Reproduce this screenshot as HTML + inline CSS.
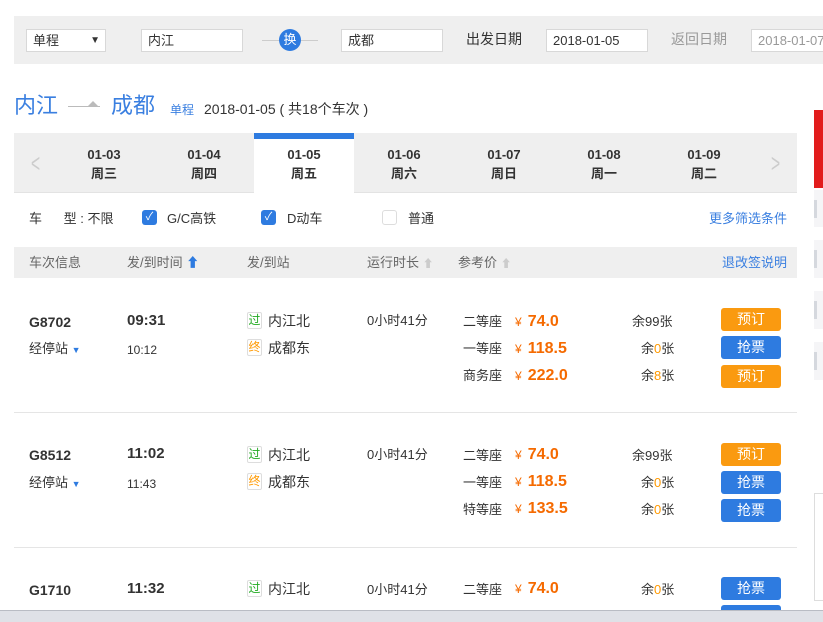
<!DOCTYPE html>
<html><head><meta charset="utf-8"><style>
*{margin:0;padding:0;box-sizing:border-box}
html,body{width:823px;height:622px;overflow:hidden}
body{background:#fff;font-family:"Liberation Sans","Noto Sans CJK SC",sans-serif;font-size:13px;color:#333;position:relative}
.a{position:absolute;white-space:nowrap;line-height:18px}
.inp{position:absolute;height:23px;border:1px solid #d8d8d8;background:#fff;font-size:13px;padding:0 6px;line-height:21px;color:#333;top:29px;white-space:nowrap;overflow:hidden}
.bt{position:absolute;width:60px;height:23px;border-radius:3px;color:#fff;font-size:14px;text-align:center;line-height:23px;left:721px}
.o{background:#fa9a10}.b{background:#2e7be0}
.pr{color:#f56a00;font-weight:bold;font-size:16px}
.pr span{font-size:12px;font-weight:normal;margin-right:6px}
.ic{display:inline-block;width:15px;height:17px;border:1px solid #ddd;border-radius:2px;font-size:12px;line-height:15px;text-align:center;margin-right:6px;vertical-align:top}
.tab{position:absolute;top:145px;width:100px;text-align:center;font-weight:bold;font-size:13px;line-height:19px;color:#333}
.cb{position:absolute;width:15px;height:15px;border-radius:3px;background:#2e7be0;top:210px;color:#fff;font-size:11px;text-align:center;line-height:15px}
</style></head><body>
<div class="a" style="left:14px;top:16px;width:809px;height:48px;background:#efefef"></div>
<div class="inp" style="left:26px;width:80px">单程<span style="position:absolute;right:5px;top:0;font-size:10px">▼</span></div>
<div class="inp" style="left:141px;width:102px">内江</div>
<div class="a" style="left:262px;top:40px;width:56px;height:1px;background:#ccc"></div>
<div class="a" style="left:279px;top:29px;width:22px;height:22px;border-radius:50%;background:#2e7be0;color:#fff;font-size:13px;text-align:center;line-height:22px">换</div>
<div class="inp" style="left:341px;width:102px">成都</div>
<div class="a" style="left:466px;top:30px;font-size:14px;color:#333">出发日期</div>
<div class="inp" style="left:546px;width:102px">2018-01-05</div>
<div class="a" style="left:671px;top:30px;font-size:14px;color:#999">返回日期</div>
<div class="inp" style="left:751px;width:90px;color:#999">2018-01-07</div>

<div class="a" style="left:14px;top:92px;font-size:22px;line-height:28px;color:#3a7fe0">内江</div>
<div class="a" style="left:68px;top:106px;width:32px;height:1px;background:#bbb"></div>
<div class="a" style="left:88px;top:101px;width:0;height:0;border-left:5px solid transparent;border-right:5px solid transparent;border-bottom:5px solid #bbb"></div>
<div class="a" style="left:111px;top:92px;font-size:22px;line-height:28px;color:#3a7fe0">成都</div>
<div class="a" style="left:170px;top:101px;font-size:12px;color:#3a7fe0">单程</div>
<div class="a" style="left:204px;top:100px;font-size:14px;color:#333">2018-01-05 ( 共18个车次 )</div>

<div class="a" style="left:14px;top:133px;width:783px;height:60px;background:#efefef;border-bottom:1px solid #e3e3e3"></div>
<div class="a" style="left:254px;top:133px;width:100px;height:61px;background:#fff;border-top:6px solid #2e7be0"></div>
<div class="a" style="left:28px;top:148px;font-size:26px;line-height:30px;color:#ccc;transform:scaleX(.6)">&lt;</div>
<div class="a" style="left:768px;top:148px;font-size:26px;line-height:30px;color:#ccc;transform:scaleX(.6)">&gt;</div>
<div class="tab" style="left:54px">01-03<br>周三</div>
<div class="tab" style="left:154px">01-04<br>周四</div>
<div class="tab" style="left:254px">01-05<br>周五</div>
<div class="tab" style="left:354px">01-06<br>周六</div>
<div class="tab" style="left:454px">01-07<br>周日</div>
<div class="tab" style="left:554px">01-08<br>周一</div>
<div class="tab" style="left:654px">01-09<br>周二</div>

<div class="a" style="left:29px;top:210px">车&nbsp;&nbsp;&nbsp;&nbsp;&nbsp;&nbsp;型 : 不限</div>
<div class="cb" style="left:142px">✓</div><div class="a" style="left:167px;top:210px">G/C高铁</div>
<div class="cb" style="left:261px">✓</div><div class="a" style="left:287px;top:210px">D动车</div>
<div class="a" style="left:382px;top:210px;width:15px;height:15px;border:1px solid #ddd;border-radius:3px"></div><div class="a" style="left:408px;top:210px">普通</div>
<div class="a" style="left:709px;top:210px;color:#3a7fe0">更多筛选条件</div>

<div class="a" style="left:14px;top:247px;width:783px;height:31px;background:#efefef"></div>
<div class="a" style="left:29px;top:254px;color:#666">车次信息</div>
<div class="a" style="left:127px;top:254px;color:#666">发/到时间 <span style="color:#2e7be0">⬆</span></div>
<div class="a" style="left:247px;top:254px;color:#666">发/到站</div>
<div class="a" style="left:367px;top:254px;color:#666">运行时长 <span style="color:#ccc;font-size:11px">⬆</span></div>
<div class="a" style="left:458px;top:254px;color:#666">参考价 <span style="color:#ccc;font-size:11px">⬆</span></div>
<div class="a" style="left:722px;top:254px;color:#3a7fe0">退改签说明</div>

<!-- row1 -->
<div class="a" style="left:29px;top:313px;font-weight:bold;font-size:14px">G8702</div>
<div class="a" style="left:29px;top:340px">经停站 <span style="color:#2e7be0;font-size:9px">▼</span></div>
<div class="a" style="left:127px;top:312px;font-weight:bold;font-size:15px">09:31</div>
<div class="a" style="left:127px;top:341px;font-size:12px">10:12</div>
<div class="a" style="left:247px;top:312px;font-size:14px"><span class="ic" style="color:#2a2">过</span>内江北</div>
<div class="a" style="left:247px;top:339px;font-size:14px"><span class="ic" style="color:#f90">终</span>成都东</div>
<div class="a" style="left:367px;top:312px">0小时41分</div>
<div class="a" style="left:463px;top:313px">二等座</div><div class="a pr" style="left:515px;top:313px"><span>¥</span>74.0</div>
<div class="a" style="left:463px;top:340px">一等座</div><div class="a pr" style="left:515px;top:340px"><span>¥</span>118.5</div>
<div class="a" style="left:463px;top:367px">商务座</div><div class="a pr" style="left:515px;top:367px"><span>¥</span>222.0</div>
<div class="a" style="left:632px;top:313px">余99张</div>
<div class="a" style="left:641px;top:340px">余<span style="color:#f90">0</span>张</div>
<div class="a" style="left:641px;top:367px">余<span style="color:#f90">8</span>张</div>
<div class="bt o" style="top:308px">预订</div>
<div class="bt b" style="top:336px">抢票</div>
<div class="bt o" style="top:365px">预订</div>
<div class="a" style="left:14px;top:412px;width:783px;height:1px;background:#e5e5e5"></div>

<!-- row2 -->
<div class="a" style="left:29px;top:446px;font-weight:bold;font-size:14px">G8512</div>
<div class="a" style="left:29px;top:474px">经停站 <span style="color:#2e7be0;font-size:9px">▼</span></div>
<div class="a" style="left:127px;top:445px;font-weight:bold;font-size:15px">11:02</div>
<div class="a" style="left:127px;top:475px;font-size:12px">11:43</div>
<div class="a" style="left:247px;top:446px;font-size:14px"><span class="ic" style="color:#2a2">过</span>内江北</div>
<div class="a" style="left:247px;top:473px;font-size:14px"><span class="ic" style="color:#f90">终</span>成都东</div>
<div class="a" style="left:367px;top:446px">0小时41分</div>
<div class="a" style="left:463px;top:447px">二等座</div><div class="a pr" style="left:515px;top:446px"><span>¥</span>74.0</div>
<div class="a" style="left:463px;top:474px">一等座</div><div class="a pr" style="left:515px;top:473px"><span>¥</span>118.5</div>
<div class="a" style="left:463px;top:501px">特等座</div><div class="a pr" style="left:515px;top:500px"><span>¥</span>133.5</div>
<div class="a" style="left:632px;top:447px">余99张</div>
<div class="a" style="left:641px;top:474px">余<span style="color:#f90">0</span>张</div>
<div class="a" style="left:641px;top:501px">余<span style="color:#f90">0</span>张</div>
<div class="bt o" style="top:443px">预订</div>
<div class="bt b" style="top:471px">抢票</div>
<div class="bt b" style="top:499px">抢票</div>
<div class="a" style="left:14px;top:547px;width:783px;height:1px;background:#e5e5e5"></div>

<!-- row3 -->
<div class="a" style="left:29px;top:581px;font-weight:bold;font-size:14px">G1710</div>
<div class="a" style="left:127px;top:580px;font-weight:bold;font-size:15px">11:32</div>
<div class="a" style="left:247px;top:580px;font-size:14px"><span class="ic" style="color:#2a2">过</span>内江北</div>
<div class="a" style="left:367px;top:581px">0小时41分</div>
<div class="a" style="left:463px;top:581px">二等座</div><div class="a pr" style="left:515px;top:580px"><span>¥</span>74.0</div>
<div class="a" style="left:641px;top:581px">余<span style="color:#f90">0</span>张</div>
<div class="bt b" style="top:577px">抢票</div>
<div class="a" style="left:721px;top:605px;width:60px;height:5px;background:#2e7be0;border-radius:3px 3px 0 0"></div>

<!-- right side -->
<div class="a" style="left:814px;top:110px;width:9px;height:78px;background:#e21c1c"></div>
<div class="a" style="left:814px;top:190px;width:9px;height:37px;background:#f5f5f7"></div>
<div class="a" style="left:814px;top:200px;width:3px;height:18px;background:#d5d8de"></div>
<div class="a" style="left:814px;top:240px;width:9px;height:38px;background:#f5f5f7"></div>
<div class="a" style="left:814px;top:250px;width:3px;height:18px;background:#d5d8de"></div>
<div class="a" style="left:814px;top:291px;width:9px;height:38px;background:#f5f5f7"></div>
<div class="a" style="left:814px;top:301px;width:3px;height:18px;background:#d5d8de"></div>
<div class="a" style="left:814px;top:342px;width:9px;height:38px;background:#f5f5f7"></div>
<div class="a" style="left:814px;top:352px;width:3px;height:18px;background:#d5d8de"></div>
<div class="a" style="left:814px;top:493px;width:12px;height:108px;border:1px solid #ddd;background:#fff"></div>
<div class="a" style="left:0;top:610px;width:823px;height:12px;background:#dfe1e7;border-top:1px solid #b9bcc4"></div>
</body></html>
